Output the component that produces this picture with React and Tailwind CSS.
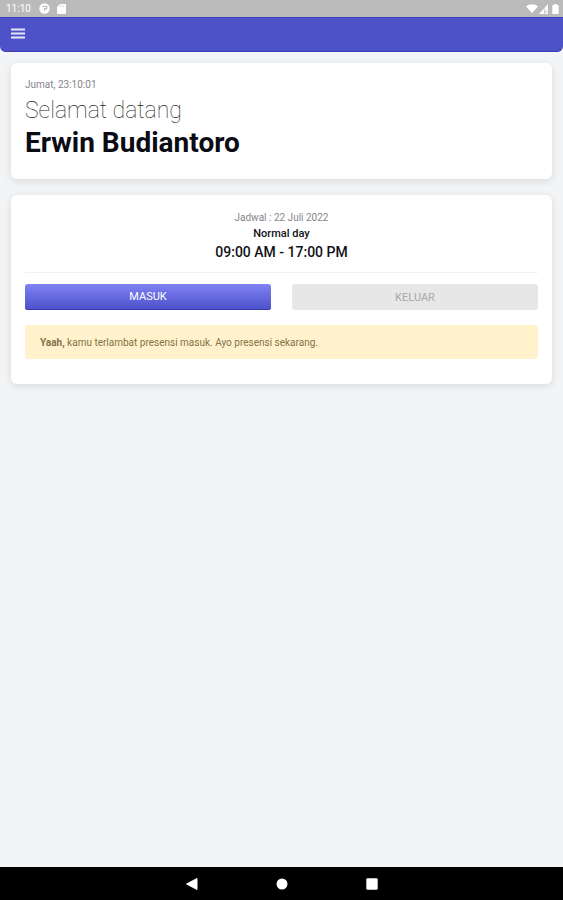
import { useState } from 'react';

const schedule = {
  date: '22 Juli 2022',
  name: 'Normal day',
  start: '09:00 AM',
  end: '17:00 PM',
};

function StatusBar() {
  return (
    <div className="flex h-[17px] items-center justify-between bg-[#bababa] pl-[6px] pr-1 text-white">
      <div className="flex items-center">
        <span className="w-[33px] text-[10px] leading-[17px]">11:10</span>
        <svg className="h-[11px] w-[11px]" viewBox="0 0 11 11">
          <circle cx="5.5" cy="5.5" r="5.2" fill="#fff" />
          <path d="M3.300 3.500h4.400v2.200H5.500v2.200" fill="none" stroke="#bababa" strokeWidth="1.2" />
        </svg>
        <svg className="ml-[7px] h-[10px] w-[9px]" viewBox="0 0 9 10">
          <path d="M3 0h5a1 1 0 0 1 1 1v8a1 1 0 0 1-1 1H1a1 1 0 0 1-1-1V3z" fill="#fff" />
          <path d="M3.3 1.3v1.6M5 1.3v1.6M6.7 1.3v1.6" stroke="#bababa" strokeWidth=".6" />
        </svg>
      </div>
      <div className="flex items-center">
        <svg className="h-[9px] w-[12px]" viewBox="0 0 12 9">
          <path d="M0 2.4C3.4-.6 8.600-.6 12 2.4L6 9z" fill="#fff" />
        </svg>
        <svg className="ml-px h-[10px] w-[9px]" viewBox="0 0 9 10">
          <path d="M0 10 9 0v10z" fill="#fff" />
          <path d="M5.600 4.500v5.500M6 6.500 8.500 9M8.500 6.500 6 9" stroke="#bababa" strokeWidth=".7" />
        </svg>
        <svg className="ml-1 h-[10px] w-[7px]" viewBox="0 0 7 10">
          <path d="M2.200 0h2.600v1H6a.7.7 0 0 1 .7.7v7.600a.7.7 0 0 1-.7.7H1a.7.7 0 0 1-.7-.7V1.700A.7.7 0 0 1 1 1h1.200z" fill="#fff" />
        </svg>
      </div>
    </div>
  );
}

function Header({ onToggle }) {
  return (
    <header className="flex h-[35px] items-center rounded-b-md border-y border-[#3c3db8] bg-[#4d52c8] pl-[11px]">
      <button type="button" aria-label="Menu" onClick={onToggle} className="pb-[2px]">
        <svg className="h-[11px] w-[14px]" viewBox="0 0 14 11">
          <path d="M0 1.500h14M0 5.500h14M0 9.500h14" stroke="#e6e6fb" strokeWidth="2" />
        </svg>
      </button>
    </header>
  );
}

function WelcomeCard() {
  return (
    <section className="rounded-md bg-white px-[14px] pt-[14px] pb-5 shadow-[0_2px_8px_rgba(0,0,0,0.11)]">
      <p className="text-[10px] leading-4 text-[#85858b]">Jumat, 23:10:01</p>
      <h1 className="pt-[2px] text-[#0b0b14]">
        <span className="block text-[23px] leading-8 font-thin text-[#1b1b20]">Selamat datang</span>
        <span className="block text-[28px] leading-8 font-bold">Erwin Budiantoro</span>
      </h1>
    </section>
  );
}

function ScheduleCard() {
  const [late, setLate] = useState(true);

  return (
    <section className="rounded-md bg-white px-[14px] pt-[15px] pb-[25px] shadow-[0_2px_8px_rgba(0,0,0,0.11)]">
      <div className="border-b border-[#f2f2f3] pb-[10px] text-center text-[#111116]">
        <p className="text-[10px] leading-4 text-[#85858b]">Jadwal : {schedule.date}</p>
        <p className="text-[11px] leading-4 font-medium">{schedule.name}</p>
        <p className="text-[14px] leading-5 font-medium">
          {schedule.start} - {schedule.end}
        </p>
      </div>

      <div className="grid grid-cols-2 gap-[21px] pt-[11px]">
        <button
          type="button"
          onClick={() => setLate(false)}
          className="h-[26px] rounded-[3px] bg-linear-to-b from-[#8183f4] to-[#4b4fc9] pt-px text-[11px] text-white shadow-[inset_0_-1px_0_#393bb0]"
        >
          MASUK
        </button>
        <button
          type="button"
          disabled
          className="h-[26px] rounded-[3px] bg-[#e7e7e7] pt-[2px] text-[11px] text-[#a8a8a8]"
        >
          KELUAR
        </button>
      </div>

      {late && (
        <p role="alert" className="mt-[15px] rounded-[3px] bg-[#fff2cc] px-[15px] pt-[10px] pb-2 text-[10px] leading-4 text-[#857345]">
          <strong className="font-bold">Yaah,</strong> kamu terlambat presensi masuk. Ayo presensi sekarang.
        </p>
      )}
    </section>
  );
}

function NavigationBar() {
  return (
    <nav className="flex h-[33px] items-center justify-center gap-[78px] bg-black">
      <button type="button" aria-label="Back">
        <svg className="h-3 w-3" viewBox="0 0 12 12">
          <path d="M11 .5v11L.5 6z" fill="#fff" stroke="#fff" strokeLinejoin="round" />
        </svg>
      </button>
      <button type="button" aria-label="Home">
        <svg className="h-3 w-3" viewBox="0 0 12 12">
          <circle cx="6" cy="6" r="5.500" fill="#fff" />
        </svg>
      </button>
      <button type="button" aria-label="Recent apps">
        <svg className="h-3 w-3" viewBox="0 0 12 12">
          <rect x=".3" y=".3" width="11.400" height="11.400" rx="1.200" fill="#fff" />
        </svg>
      </button>
    </nav>
  );
}

export default function App() {
  const [menuOpen, setMenuOpen] = useState(false);

  return (
    <div className="flex min-h-screen flex-col bg-[#f2f4f6] font-[Roboto,sans-serif]">
      <StatusBar />
      <Header onToggle={() => setMenuOpen(!menuOpen)} />
      <main className="flex flex-1 flex-col gap-4 px-[11px] pt-[11px]">
        <WelcomeCard />
        <ScheduleCard />
      </main>
      <NavigationBar />
    </div>
  );
}
